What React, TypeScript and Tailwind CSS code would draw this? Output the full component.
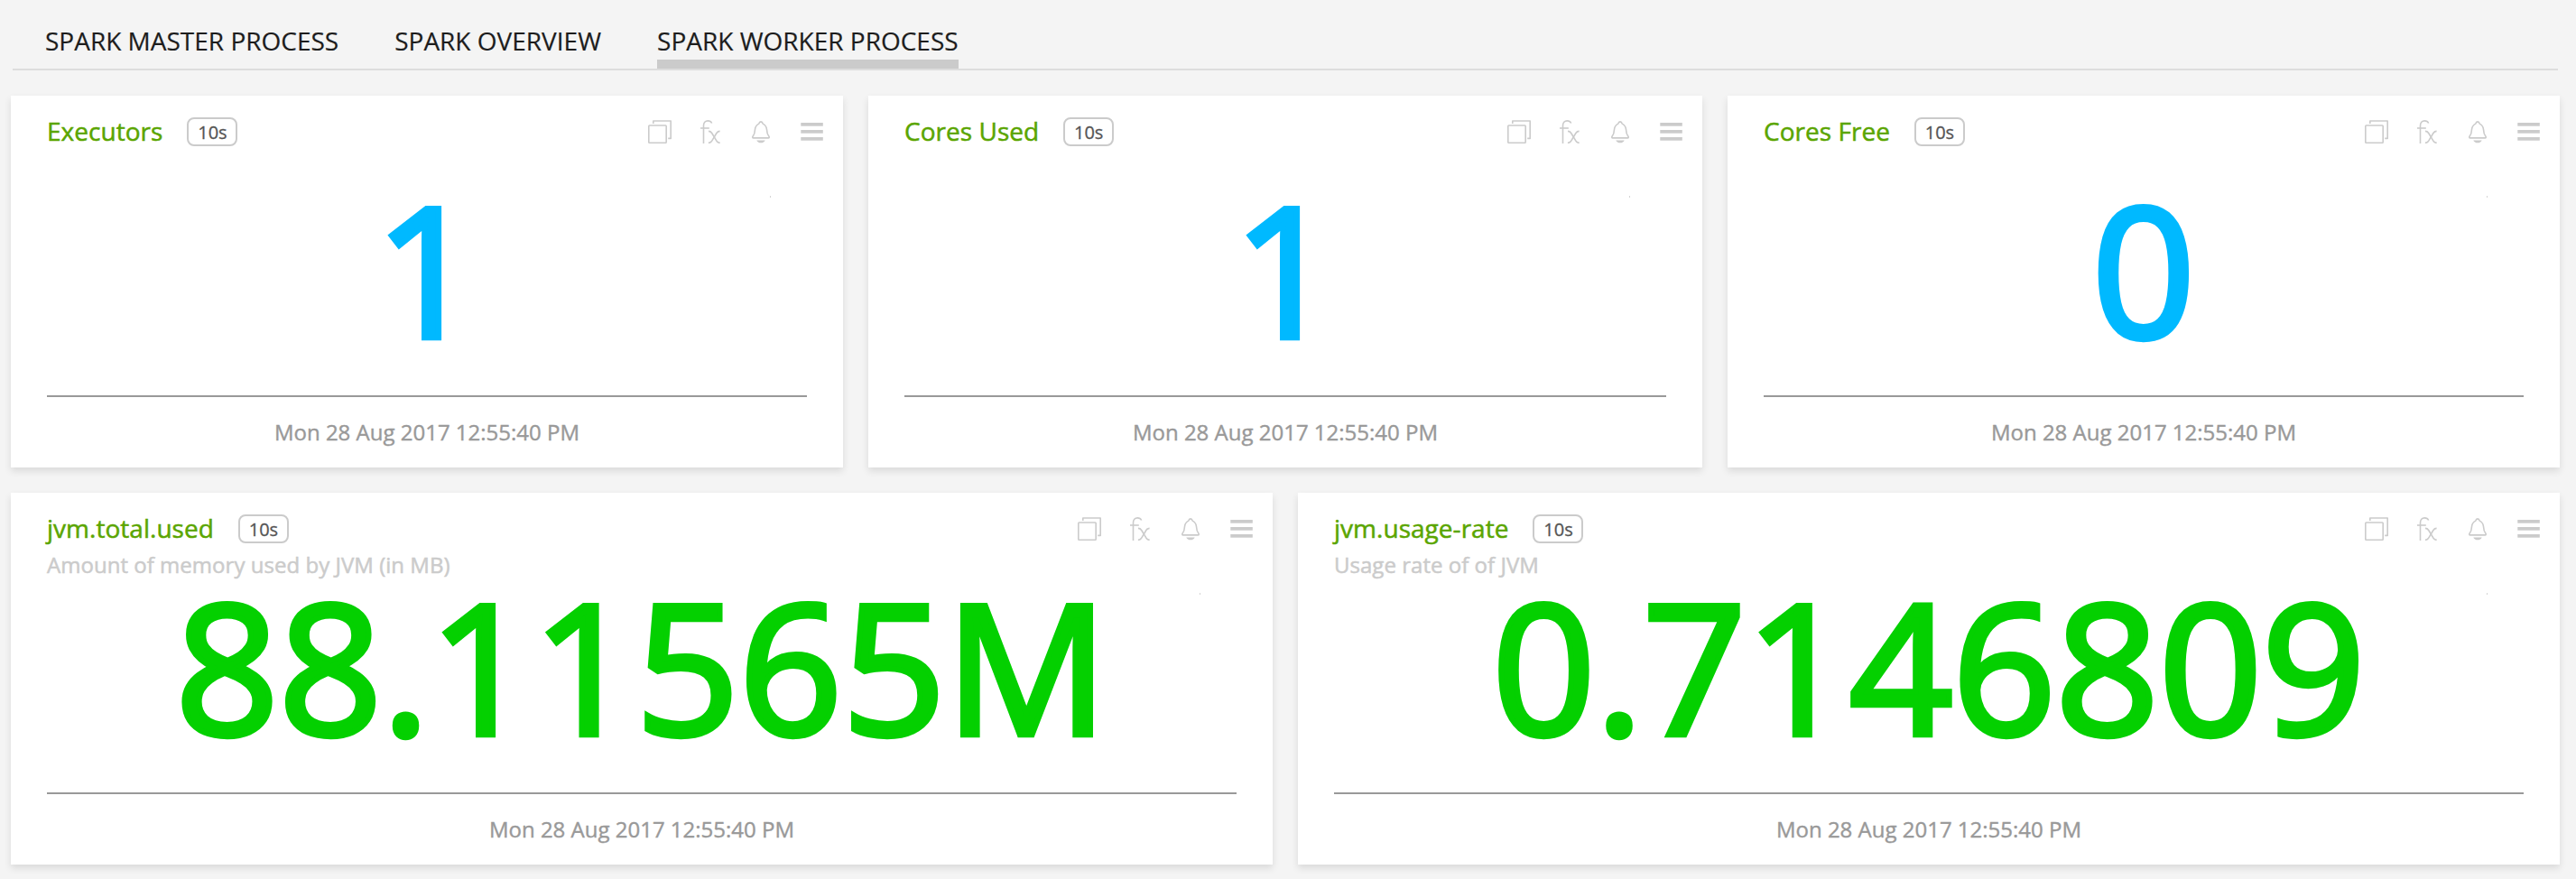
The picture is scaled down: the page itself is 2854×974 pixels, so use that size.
const FONT = "font-['Open_Sans','Noto_Sans',sans-serif]";

const tabs = [
  { label: "SPARK MASTER PROCESS", active: false },
  { label: "SPARK OVERVIEW", active: false },
  { label: "SPARK WORKER PROCESS", active: true },
];

type Tone = "blue" | "green";

interface Metric {
  title: string;
  subtitle?: string;
  value: string;
  tone: Tone;
}

const topRow: Metric[] = [
  { title: "Executors", value: "1", tone: "blue" },
  { title: "Cores Used", value: "1", tone: "blue" },
  { title: "Cores Free", value: "0", tone: "blue" },
];

const bottomRow: Metric[] = [
  {
    title: "jvm.total.used",
    subtitle: "Amount of memory used by JVM (in MB)",
    value: "88.11565M",
    tone: "green",
  },
  {
    title: "jvm.usage-rate",
    subtitle: "Usage rate of of JVM",
    value: "0.7146809",
    tone: "green",
  },
];

const toneClass: Record<Tone, string> = {
  blue: "text-[#00b9ff]",
  green: "text-[#04d000]",
};

function CopyIcon() {
  return (
    <svg width="26" height="26" viewBox="0 0 26 26" fill="none" stroke="#cbcbcb" strokeWidth="1.6">
      <path d="M5.8 4V1h19.4v19.4h-3" strokeLinejoin="round" />
      <rect x="0.8" y="6" width="19.4" height="19.2" rx="0.8" />
    </svg>
  );
}

function FxIcon() {
  return (
    <svg width="22" height="26" viewBox="0 0 22 26" fill="none" stroke="#cbcbcb" strokeWidth="1.6">
      <path d="M3.5 26V6.2C3.5 2.8 5.4 0.9 8.3 0.9c2 0 3.5 0.8 4.4 2.6" />
      <path d="M0 9h9.8" />
      <path d="M9 12.4c2 0 2.7 0.6 3.7 2.1l5.2 8.6c1 1.6 1.8 2.2 3.8 2.2" />
      <path d="M21.6 12.4c-2 0-2.7 0.6-3.7 2.1l-5.2 8.6c-1 1.6-1.8 2.2-3.8 2.2" />
    </svg>
  );
}

function BellIcon() {
  return (
    <svg width="20" height="25" viewBox="0 0 20 25" fill="none" stroke="#cbcbcb" strokeWidth="1.6">
      <path
        d="M10 0.9c-1.3 0-1.9 0.9-2.2 2.2C4.9 4.6 3.7 6.9 3.5 9.5c-0.2 3.6-0.7 5.5-2.2 7.3-0.9 1.2-0.6 2.1 0.5 2.1h16.4c1.1 0 1.4-0.9 0.5-2.1-1.5-1.8-2-3.7-2.2-7.3-0.2-2.6-1.4-4.9-4.3-6.4C11.9 1.8 11.3 0.9 10 0.9z"
        strokeLinejoin="round"
      />
      <path d="M5.3 21.4h9.4c-0.7 1.8-2.5 2.9-4.7 2.9s-4-1.1-4.7-2.9z" fill="#cbcbcb" stroke="none" />
    </svg>
  );
}

function MenuIcon() {
  return (
    <svg width="25" height="20" viewBox="0 0 25 20" fill="#cbcbcb">
      <rect x="0.3" y="0" width="24.5" height="3.7" />
      <rect x="0.3" y="8" width="24.5" height="3.7" />
      <rect x="0.3" y="16" width="24.5" height="3.7" />
    </svg>
  );
}

function MetricCard({ title, subtitle, value, tone }: Metric) {
  return (
    <section className="relative flex h-[412px] flex-col bg-white shadow-[0_4px_8px_rgba(0,0,0,0.11)]">
      <header className="flex h-14 items-end justify-between pr-[21.6px] pl-10">
        <div className="flex h-8 items-center gap-[27px]">
          <h2 className="pb-0.5 text-[28px] leading-8 tracking-[0.03px] text-[#5aa500] [-webkit-text-stroke:0.5px_#5aa500]">
            {title}
          </h2>
          <span className="flex h-8 w-14 items-center justify-center rounded-lg border-2 border-[#cbcbcb] pt-0.5 text-[20px] leading-none text-[#555] [-webkit-text-stroke:0.3px_#555]">
            10s
          </span>
        </div>
        <div className="flex h-8 items-center">
          <CopyIcon />
          <span className="w-8" />
          <FxIcon />
          <span className="w-[35px]" />
          <BellIcon />
          <span className="w-[34px]" />
          <MenuIcon />
        </div>
      </header>
      <div className="h-[34px] px-10 pt-[7px] text-[24px] leading-[34px] tracking-[0.03px] text-[#cbcbcb] [-webkit-text-stroke:0.5px_#cbcbcb]">
        {subtitle}
      </div>
      <span className="absolute top-[111px] right-20 h-0.5 w-px bg-[#d4d4d4]" />
      <div
        className={`flex h-[242px] items-start justify-center pt-px text-[200px] leading-none [-webkit-text-stroke:6.25px_currentColor] ${toneClass[tone]}`}
      >
        {value}
      </div>
      <footer className="mx-10 flex h-[78px] items-center justify-center border-t-2 border-[#999] pt-px text-[24px] text-[#999] [-webkit-text-stroke:0.4px_#999]">
        Mon 28 Aug 2017 12:55:40 PM
      </footer>
    </section>
  );
}

export default function App() {
  return (
    <main className={`h-[974px] w-[2854px] overflow-hidden bg-[#f4f4f4] ${FONT}`}>
      <nav className="ml-[14px] flex h-[78px] w-[2820px] items-end gap-[62px] border-b-2 border-[#ddd] pl-[36px]">
        {tabs.map((tab) => (
          <a
            key={tab.label}
            className={`flex h-[52px] items-start border-b-10 text-[28px] leading-[42px] text-[#1d1d1d] [-webkit-text-stroke:0.2px_#1d1d1d] ${
              tab.active ? "border-[#cbcbcb]" : "border-transparent"
            }`}
          >
            {tab.label}
          </a>
        ))}
      </nav>
      <div className="mt-7 ml-3 grid grid-cols-[922px_924px_922px] gap-7">
        {topRow.map((m) => (
          <MetricCard key={m.title} {...m} />
        ))}
      </div>
      <div className="mt-7 ml-3 grid grid-cols-[1398px_1398px] gap-7">
        {bottomRow.map((m) => (
          <MetricCard key={m.title} {...m} />
        ))}
      </div>
    </main>
  );
}
